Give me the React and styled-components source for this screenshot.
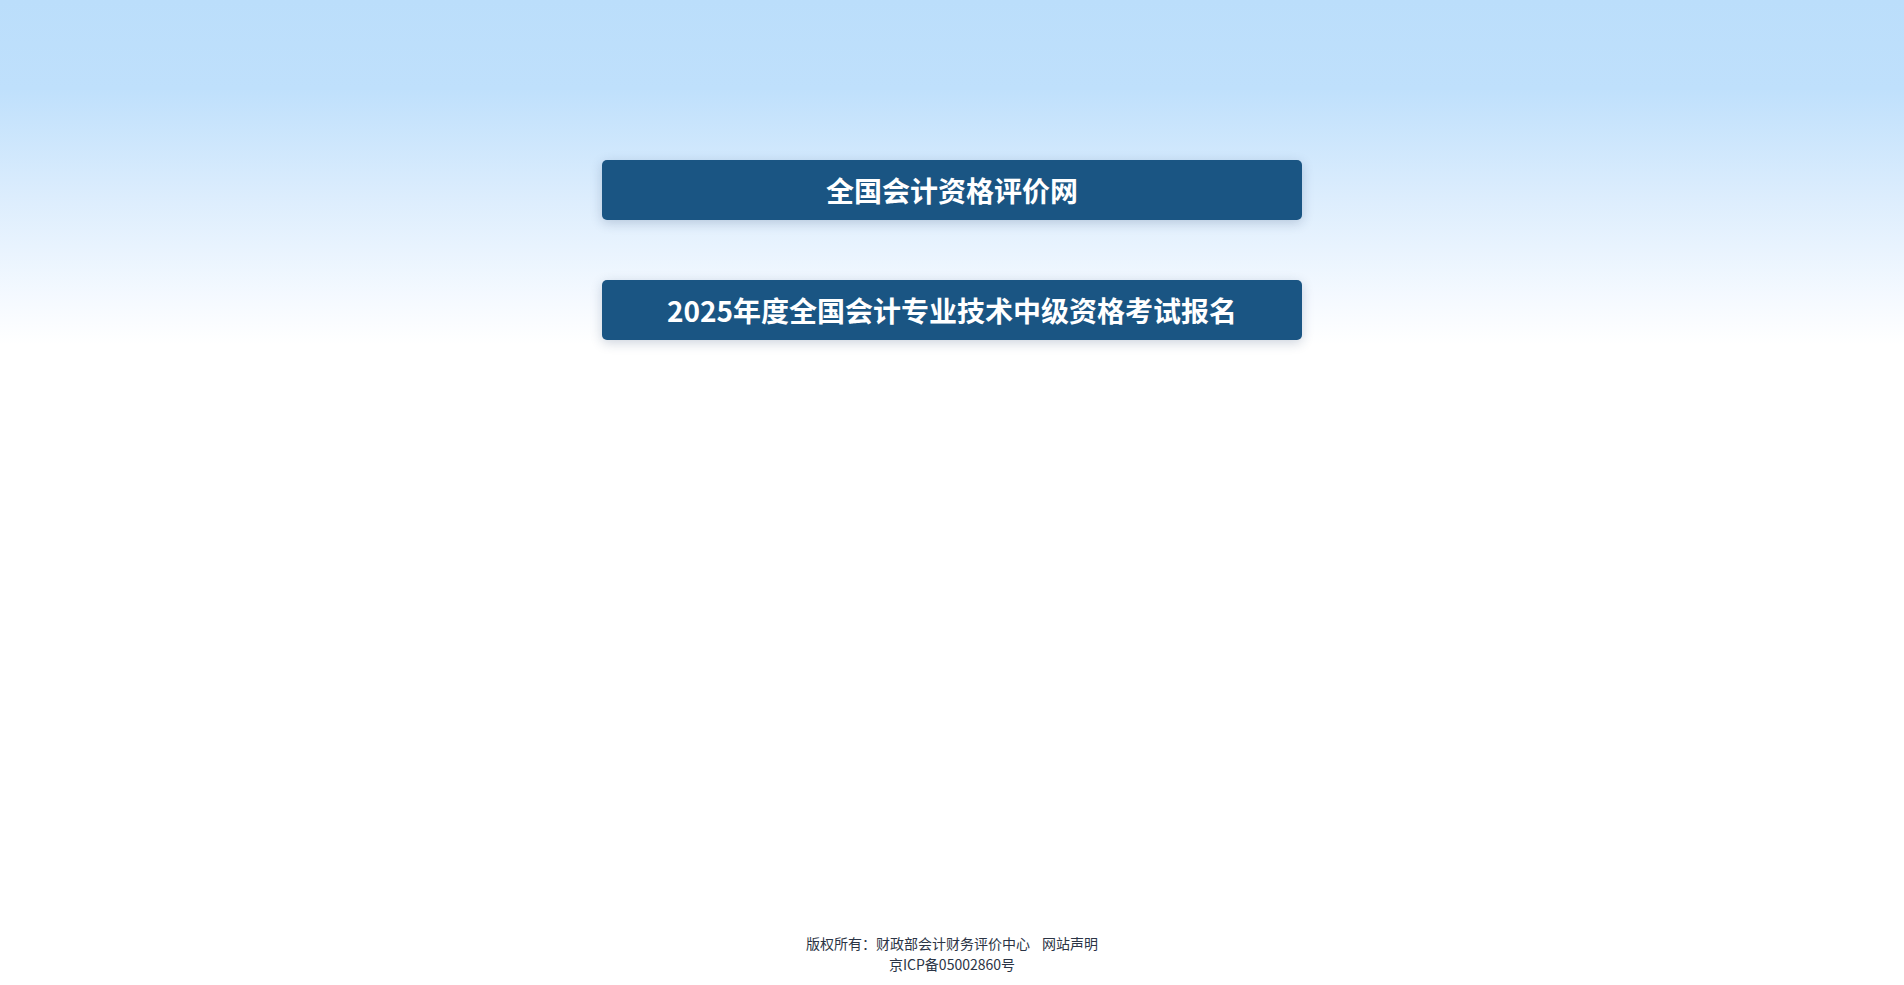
import React from 'react'
import styled, { createGlobalStyle } from 'styled-components'

const GlobalStyle = createGlobalStyle`
  html, body {
    margin: 0;
    padding: 0;
  }
  body {
    font-family: 'Noto Sans CJK SC', 'Microsoft YaHei', sans-serif;
    background: #fff;
  }
`

const Page = styled.div`
  min-height: 100vh;
  display: flex;
  flex-direction: column;
  align-items: center;
  background: linear-gradient(#bbdefb 0%, #bfe0fc 9%, #dcedfd 20%, #f4f9ff 30%, #ffffff 35%, #ffffff 100%);
  box-sizing: border-box;
`

const Menu = styled.div`
  display: flex;
  flex-direction: column;
  gap: 60px;
  margin-top: 160px;
  flex: 1;
`

const EntryButton = styled.a`
  display: flex;
  align-items: center;
  justify-content: center;
  width: 700px;
  height: 60px;
  background: #1a5583;
  border-radius: 5px;
  box-shadow: 0 3px 12px rgba(30, 60, 100, 0.22);
  color: #fff;
  font-size: 28px;
  font-weight: 700;
  text-decoration: none;
  cursor: pointer;
`

const Footer = styled.footer`
  padding-bottom: 10px;
  text-align: center;
  color: #2b3445;
  font-size: 14px;
  line-height: 21px;
`

const FooterLink = styled.a`
  color: inherit;
  text-decoration: none;
  margin-left: 12px;
`

export default function App() {
  return (
    <>
      <GlobalStyle />
      <Page>
        <Menu>
          <EntryButton>全国会计资格评价网</EntryButton>
          <EntryButton>2025年度全国会计专业技术中级资格考试报名</EntryButton>
        </Menu>
        <Footer>
          <div>
            版权所有：财政部会计财务评价中心
            <FooterLink>网站声明</FooterLink>
          </div>
          <div>京ICP备05002860号</div>
        </Footer>
      </Page>
    </>
  )
}
